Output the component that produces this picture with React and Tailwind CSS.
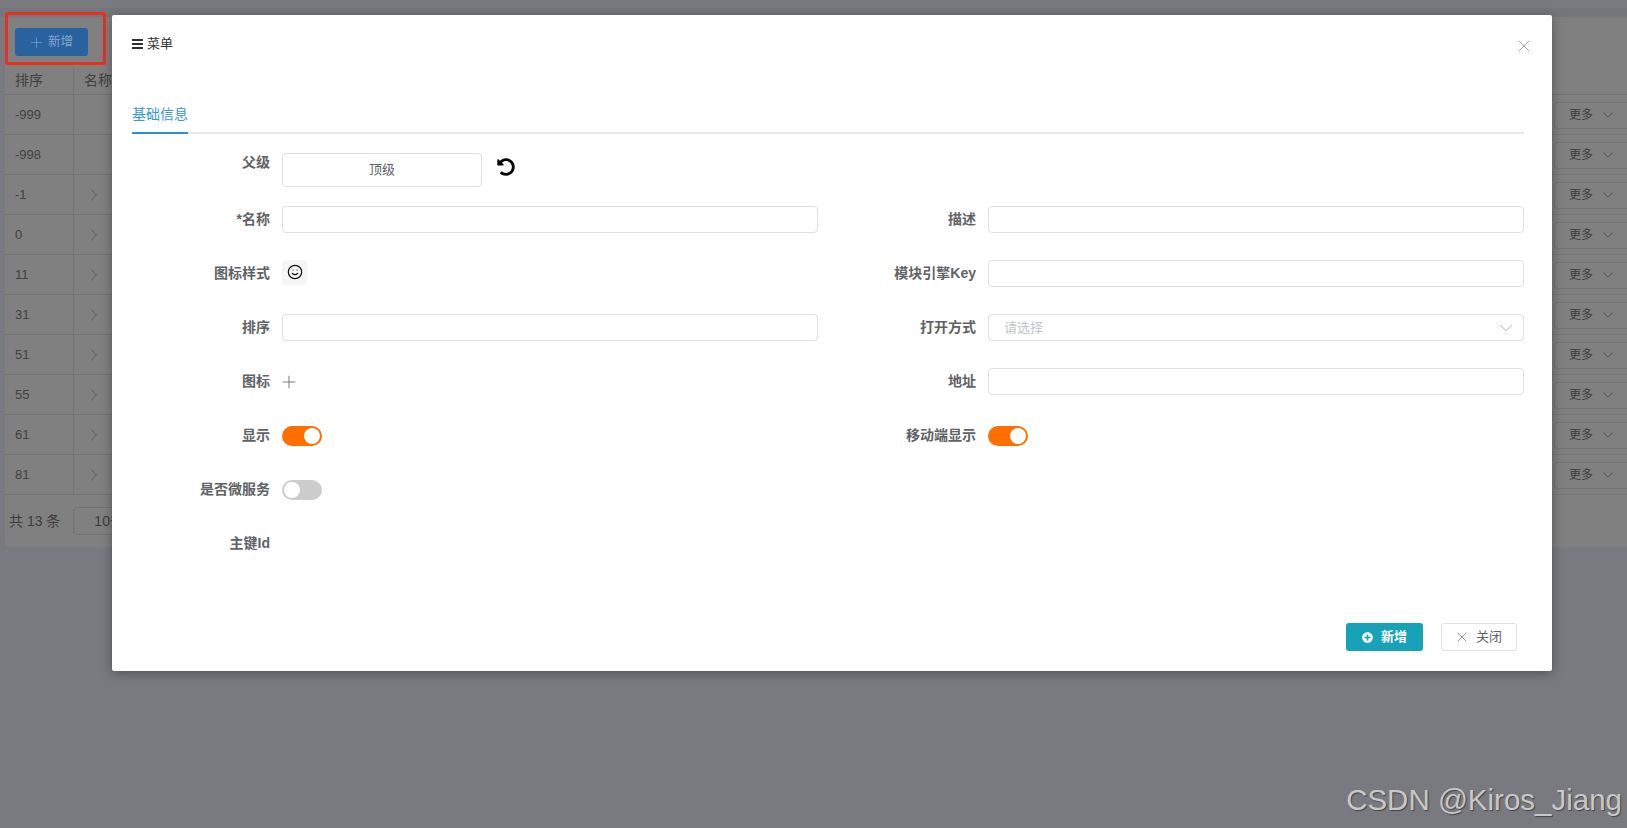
import React from "react";
import { ChevronDown, ChevronRight, Plus, Smile, X } from "lucide-react";
import { FaUndoAlt, FaPlusCircle } from "react-icons/fa";

const rows = [
  { sort: "-999", arrow: false },
  { sort: "-998", arrow: false },
  { sort: "-1", arrow: true },
  { sort: "0", arrow: true },
  { sort: "11", arrow: true },
  { sort: "31", arrow: true },
  { sort: "51", arrow: true },
  { sort: "55", arrow: true },
  { sort: "61", arrow: true },
  { sort: "81", arrow: true },
];

function BackgroundPage() {
  return (
    <div className="flex flex-col h-full">
      <div className="h-[8px] shrink-0" />
      <div className="h-[9px] shrink-0 bg-[#75767c]" />
      <div className="ml-[5px] bg-[#808080] rounded-bl-[4px] text-[14px] text-[#404040]">
        <div className="h-[50px] pl-[10px] pt-[11px]">
          <button className="w-[73px] h-[28px] pr-[2px] rounded-[3px] bg-[#28629f] text-[#86a5c8] text-[12.5px] flex items-center justify-center gap-[3px]">
            <Plus size={17} strokeWidth={1} />
            新增
          </button>
        </div>
        <div className="h-[28px] flex items-center border-b border-[#747474]">
          <div className="w-[69px] h-full pl-[10px] flex items-center border-r border-[#747474]">排序</div>
          <div className="pl-[10px]">名称</div>
        </div>
        {rows.map((row) => (
          <div key={row.sort} className="h-[40px] flex items-center border-b border-[#747474]">
            <div className="w-[69px] h-full pl-[10px] flex items-center border-r border-[#747474] text-[13px] text-[#404040]">{row.sort}</div>
            <div className="w-[30px] flex justify-end">
              {row.arrow && <ChevronRight size={20} strokeWidth={1} className="text-[#555]" />}
            </div>
            <div className="ml-auto w-[73px] h-[27px] mt-[1px] flex items-center pl-[14px] gap-[6px] border border-r-0 border-[#747474] rounded-l-[4px] text-[12px] text-[#3c3c3c]">
              更多
              <ChevronDown size={18} strokeWidth={1} className="text-[#444]" />
            </div>
          </div>
        ))}
        <div className="h-[52px] flex items-center pl-[4px] text-[#3c3c3c] text-[14px]">
          <span>共 13 条</span>
          <div className="ml-[13px] w-[120px] h-[28px] flex items-center pl-[20px] border border-[#747474] rounded-[4px]">10条</div>
        </div>
      </div>
    </div>
  );
}

function Label({ children, width, className = "" }) {
  return (
    <label className={`${width} ${className} shrink-0 text-right text-[14px] leading-[18px] font-bold text-[#606266]`}>
      {children}
    </label>
  );
}

function TextInput() {
  return <input className="w-[536px] h-[27px] border border-[#dcdfe6] rounded-[4px] bg-white" />;
}

function Toggle({ on }) {
  return (
    <div className={`w-[40px] h-[20px] rounded-full p-[2px] flex ${on ? "bg-[#ff6e00] justify-end" : "bg-[#cccccc] justify-start"}`}>
      <div className="w-[16px] h-[16px] rounded-full bg-white" />
    </div>
  );
}

function Field({ label, right, children }) {
  return (
    <div className="h-[27px] flex items-center gap-[12px]">
      <Label width={right ? "w-[128px]" : "w-[138px]"} className="pb-[2px]">{label}</Label>
      {children}
    </div>
  );
}

function MenuDialog() {
  return (
    <div className="absolute left-[112px] top-[15px] w-[1440px] h-[656px] bg-white rounded-[2px] shadow-[0_2px_12px_rgba(0,0,0,0.35)] flex flex-col px-[20px] pr-[28px]">
      <div className="h-[58px] shrink-0 flex items-center gap-[4px] text-[13px] text-[#303133]">
        <svg width="11" height="10" viewBox="0 0 11 10" className="mt-[-1px]">
          <path d="M0 1h11M0 5h11M0 9h11" stroke="#303133" strokeWidth="2" />
        </svg>
        菜单
      </div>
      <X size={20} strokeWidth={1} className="absolute right-[18px] top-[21px] text-[#909399]" />

      <div className="mt-[25px] h-[36px] shrink-0 border-b-2 border-[#e2e7f0]">
        <div className="w-[56px] h-[36px] border-b-2 border-[#2a8be0] text-[14px] leading-[32px] text-[#3497d6]">基础信息</div>
      </div>

      <div className="mt-[19px] h-[34px] shrink-0 flex items-start gap-[12px]">
        <Label width="w-[138px]">父级</Label>
        <div className="w-[200px] h-[34px] border border-[#dcdfe6] rounded-[4px] flex items-center justify-center text-[13px] text-[#606266]">顶级</div>
        <FaUndoAlt size={18} className="ml-[3px] mt-[5px] text-black" />
      </div>

      <div className="mt-[19px] grid grid-cols-[686px_676px] gap-x-[30px] gap-y-[27px]">
        <Field label="*名称"><TextInput /></Field>
        <Field label="描述" right><TextInput /></Field>

        <Field label="图标样式">
          <div className="w-[25px] h-[25px] mt-[-3px] rounded-[4px] bg-[#f5f5f5] flex items-center justify-center">
            <Smile size={16} strokeWidth={1.8} className="text-[#111]" />
          </div>
        </Field>
        <Field label="模块引擎Key" right><TextInput /></Field>

        <Field label="排序"><TextInput /></Field>
        <Field label="打开方式" right>
          <div className="w-[536px] h-[27px] border border-[#dcdfe6] rounded-[4px] flex items-center justify-between pl-[15px] pr-[6px] text-[13px] text-[#c0c4cc]">
            请选择
            <ChevronDown size={22} strokeWidth={1} className="text-[#a8abb2]" />
          </div>
        </Field>

        <Field label="图标"><Plus size={20} strokeWidth={1} className="text-[#606266] ml-[-3px]" /></Field>
        <Field label="地址" right><TextInput /></Field>

        <Field label="显示"><Toggle on /></Field>
        <Field label="移动端显示" right><Toggle on /></Field>

        <Field label="是否微服务"><Toggle /></Field>
        <div />

        <Field label="主键Id" />
      </div>

      <div className="mt-auto mb-[20px] pr-[7px] flex justify-end gap-[18px]">
        <button className="w-[77px] h-[28px] rounded-[3px] bg-[#17a2b8] text-white text-[13px] font-bold flex items-center justify-center gap-[8px]">
          <FaPlusCircle size={11} />
          新增
        </button>
        <button className="w-[76px] h-[28px] pr-[2px] rounded-[3px] border border-[#dcdfe6] bg-white text-[#606266] text-[13px] flex items-center justify-center gap-[6px]">
          <X size={16} strokeWidth={1} />
          关闭
        </button>
      </div>
    </div>
  );
}

export default function App() {
  return (
    <div className="relative w-[1627px] h-[828px] overflow-hidden bg-[#797a80] font-['Liberation_Sans','Noto_Sans_CJK_SC',sans-serif]">
      <BackgroundPage />
      {/* red annotation box from the original screenshot */}
      <div className="absolute left-[5px] top-[12px] w-[101px] h-[53px] border-[3px] border-[#e8301f] rounded-[3px]" />
      <MenuDialog />
      <div className="absolute right-[5px] top-[780px] text-[29.5px] leading-[40px] text-[#c8c8c8] [text-shadow:1px_1px_1px_#444]">
        CSDN @Kiros_Jiang
      </div>
    </div>
  );
}
